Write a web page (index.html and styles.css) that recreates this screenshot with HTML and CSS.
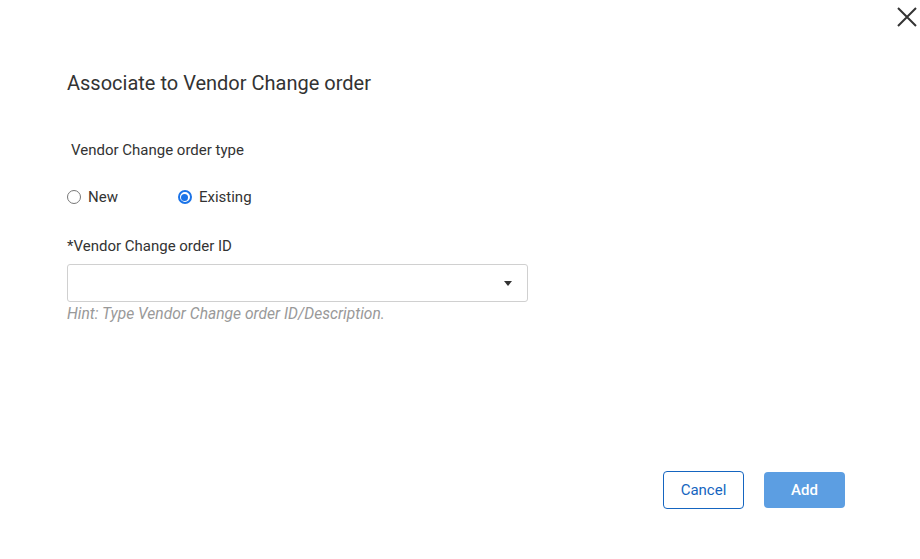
FILE: index.html
```html
<!DOCTYPE html>
<html lang="en">
<head>
<meta charset="utf-8">
<title>Associate to Vendor Change order</title>
<link rel="stylesheet" href="styles.css">
</head>
<body>
<div class="dialog">
  <button class="close" aria-label="Close">
    <svg width="24" height="24" viewBox="0 0 24 24"><path d="M3 3 L21 21 M21 3 L3 21" stroke="#333" stroke-width="2" fill="none"/></svg>
  </button>
  <h1 class="title">Associate to Vendor Change order</h1>
  <div class="type-label">Vendor Change order type</div>
  <div class="radios">
    <label class="radio"><span class="dot"></span>New</label>
    <label class="radio checked"><span class="dot"></span>Existing</label>
  </div>
  <div class="field-label">*Vendor Change order ID</div>
  <div class="select"><span class="arrow"></span></div>
  <div class="hint">Hint: Type Vendor Change order ID/Description.</div>
  <div class="footer">
    <button class="btn btn-cancel">Cancel</button>
    <button class="btn btn-add">Add</button>
  </div>
</div>
</body>
</html>
```

FILE: styles.css
```css
html, body {
  margin: 0;
  padding: 0;
  background: #fff;
}
body {
  font-family: Roboto, "Liberation Sans", Arial, sans-serif;
  color: #333;
  width: 920px;
  height: 559px;
  overflow: hidden;
}
.dialog {
  position: relative;
  padding: 71px 75px 0 67px;
  display: flex;
  flex-direction: column;
  align-items: flex-start;
  height: 559px;
  box-sizing: border-box;
}
.close {
  position: absolute;
  top: 5px;
  right: 1px;
  width: 24px;
  height: 24px;
  padding: 0;
  border: 0;
  background: none;
  cursor: pointer;
}
.close svg { display: block; }
.title {
  margin: 0;
  font-size: 20px;
  line-height: 24px;
  font-weight: 400;
  color: #333;
}
.type-label {
  margin-top: 46px;
  margin-left: 4px;
  font-size: 15px;
  line-height: 18px;
}
.radios {
  margin-top: 29px;
  display: flex;
  gap: 60px;
  font-size: 15px;
  line-height: 18px;
}
.radio {
  display: flex;
  align-items: center;
  gap: 7px;
}
.dot {
  width: 14px;
  height: 14px;
  box-sizing: border-box;
  border: 1px solid #777;
  border-radius: 50%;
  display: inline-block;
  position: relative;
}
.radio.checked .dot {
  border: 2px solid #1a73e8;
}
.radio.checked .dot::after {
  content: "";
  position: absolute;
  left: 1.5px;
  top: 1.5px;
  width: 7px;
  height: 7px;
  border-radius: 50%;
  background: #1a73e8;
}
.field-label {
  margin-top: 31px;
  font-size: 15px;
  line-height: 18px;
}
.select {
  margin-top: 9px;
  width: 461px;
  height: 38px;
  box-sizing: border-box;
  border: 1px solid #d0d0d0;
  border-radius: 3px;
  display: flex;
  align-items: center;
  justify-content: flex-end;
  padding-right: 15px;
}
.arrow {
  width: 0;
  height: 0;
  border-left: 4px solid transparent;
  border-right: 4px solid transparent;
  border-top: 5px solid #333;
}
.hint {
  margin-top: 3px;
  font-size: 15.6px;
  line-height: 18px;
  font-style: italic;
  color: #999;
}
.footer {
  margin-top: 148px;
  align-self: flex-end;
  display: flex;
  gap: 20px;
  align-items: center;
}
.btn {
  font-family: Roboto, "Liberation Sans", Arial, sans-serif;
  font-size: 15px;
  border-radius: 4px;
  cursor: pointer;
  padding: 0;
}
.btn-cancel {
  width: 81px;
  height: 38px;
  background: #fff;
  border: 1px solid #1565c0;
  color: #1565c0;
}
.btn-add {
  width: 81px;
  height: 36px;
  background: #5c9ee2;
  border: 0;
  color: #fff;
  font-weight: 500;
}
```
